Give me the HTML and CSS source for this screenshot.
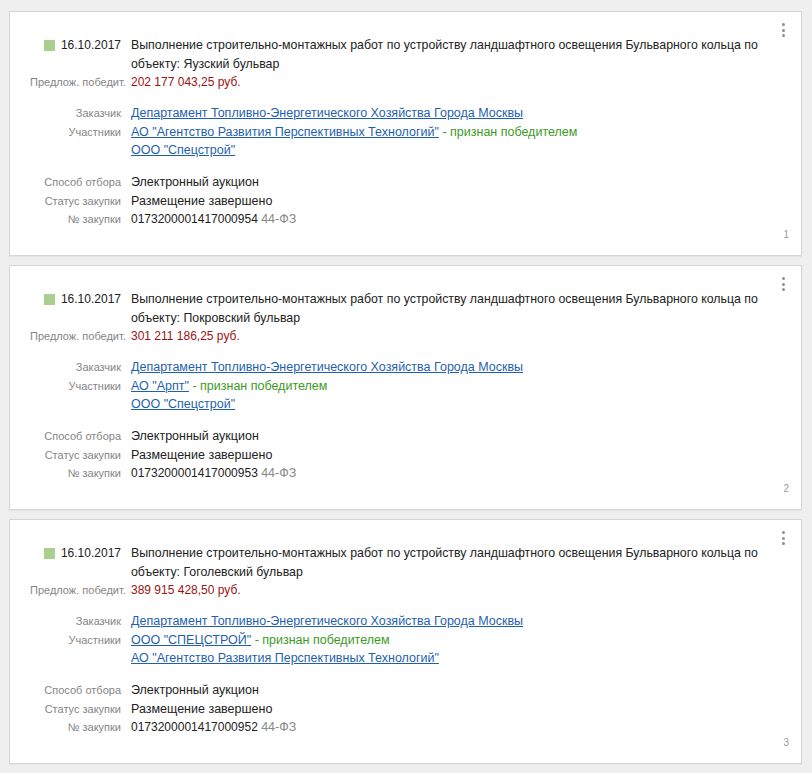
FILE: index.html
```html
<!DOCTYPE html>
<html lang="ru">
<head>
<meta charset="utf-8">
<title>Закупки</title>
<link rel="stylesheet" href="styles.css">
</head>
<body>
<div class="list">

  <div class="card">
    <button class="menu" aria-label="Меню"><span></span><span></span><span></span></button>
    <div class="grid">
      <div class="label date-cell"><span class="sq"></span><span class="date">16.10.2017</span></div>
      <div class="value title">Выполнение строительно-монтажных работ по устройству ландшафтного освещения Бульварного кольца по объекту: Яузский бульвар</div>
      <div class="label">Предлож. победит.</div>
      <div class="value price">202 177 043,25 руб.</div>
    </div>
    <div class="grid group">
      <div class="label">Заказчик</div>
      <div class="value"><a href="#">Департамент Топливно-Энергетического Хозяйства Города Москвы</a></div>
      <div class="label">Участники</div>
      <div class="value"><a href="#">АО "Агентство Развития Перспективных Технологий"</a> <span class="win">- признан победителем</span><br><a href="#">ООО "Спецстрой"</a></div>
    </div>
    <div class="grid group group2">
      <div class="label">Способ отбора</div>
      <div class="value">Электронный аукцион</div>
      <div class="label">Статус закупки</div>
      <div class="value">Размещение завершено</div>
      <div class="label">№ закупки</div>
      <div class="value num-value">0173200001417000954 <span class="law">44-ФЗ</span></div>
    </div>
    <div class="num">1</div>
  </div>

  <div class="card">
    <button class="menu" aria-label="Меню"><span></span><span></span><span></span></button>
    <div class="grid">
      <div class="label date-cell"><span class="sq"></span><span class="date">16.10.2017</span></div>
      <div class="value title">Выполнение строительно-монтажных работ по устройству ландшафтного освещения Бульварного кольца по объекту: Покровский бульвар</div>
      <div class="label">Предлож. победит.</div>
      <div class="value price">301 211 186,25 руб.</div>
    </div>
    <div class="grid group">
      <div class="label">Заказчик</div>
      <div class="value"><a href="#">Департамент Топливно-Энергетического Хозяйства Города Москвы</a></div>
      <div class="label">Участники</div>
      <div class="value"><a href="#">АО "Арпт"</a> <span class="win">- признан победителем</span><br><a href="#">ООО "Спецстрой"</a></div>
    </div>
    <div class="grid group group2">
      <div class="label">Способ отбора</div>
      <div class="value">Электронный аукцион</div>
      <div class="label">Статус закупки</div>
      <div class="value">Размещение завершено</div>
      <div class="label">№ закупки</div>
      <div class="value num-value">0173200001417000953 <span class="law">44-ФЗ</span></div>
    </div>
    <div class="num">2</div>
  </div>

  <div class="card">
    <button class="menu" aria-label="Меню"><span></span><span></span><span></span></button>
    <div class="grid">
      <div class="label date-cell"><span class="sq"></span><span class="date">16.10.2017</span></div>
      <div class="value title">Выполнение строительно-монтажных работ по устройству ландшафтного освещения Бульварного кольца по объекту: Гоголевский бульвар</div>
      <div class="label">Предлож. победит.</div>
      <div class="value price">389 915 428,50 руб.</div>
    </div>
    <div class="grid group">
      <div class="label">Заказчик</div>
      <div class="value"><a href="#">Департамент Топливно-Энергетического Хозяйства Города Москвы</a></div>
      <div class="label">Участники</div>
      <div class="value"><a href="#">ООО "СПЕЦСТРОЙ"</a> <span class="win">- признан победителем</span><br><a href="#">АО "Агентство Развития Перспективных Технологий"</a></div>
    </div>
    <div class="grid group group2">
      <div class="label">Способ отбора</div>
      <div class="value">Электронный аукцион</div>
      <div class="label">Статус закупки</div>
      <div class="value">Размещение завершено</div>
      <div class="label">№ закупки</div>
      <div class="value num-value">0173200001417000952 <span class="law">44-ФЗ</span></div>
    </div>
    <div class="num">3</div>
  </div>

</div>
</body>
</html>
```

FILE: styles.css
```css
* { box-sizing: border-box; }
html, body {
  margin: 0;
  padding: 0;
  background: #efefef;
}
body {
  font-family: "Liberation Sans", Arial, Helvetica, sans-serif;
  font-size: 12px;
  color: #222;
}
.list {
  display: flex;
  flex-direction: column;
  gap: 9px;
  padding: 11px 10px 9px 9px;
}
.card {
  position: relative;
  display: flex;
  flex-direction: column;
  height: 245px;
  background: #fff;
  border: 1px solid #d6d6d6;
  box-shadow: 0 1px 1px rgba(0,0,0,0.04);
  padding: 24px 28px 17px 20px;
}
.grid {
  display: grid;
  grid-template-columns: 91px 1fr;
  column-gap: 10px;
  line-height: 18.5px;
}
.group { margin-top: 12.5px; }
.group2 { margin-top: 13.5px; }
.label {
  text-align: right;
  font-size: 11px;
  color: #858585;
  white-space: nowrap;
}
.date-cell {
  display: flex;
  justify-content: flex-end;
  align-items: center;
  gap: 6px;
  height: 18.5px;
}
.sq {
  display: inline-block;
  width: 11px;
  height: 11px;
  background: #a9d08e;
}
.date {
  font-size: 12px;
  color: #222;
}
.value {
  color: #222;
  font-size: 12.5px;
}
.title { font-size: 12.35px; }
.price { color: #9c1212; font-size: 12px; }
.num-value { font-size: 12px; }
.law { color: #888; font-size: 12.5px; }
a { color: #1f5fb0; text-decoration: underline; }
.win { color: #3d9a1f; }
.num {
  margin-top: auto;
  text-align: right;
  font-size: 10px;
  line-height: 12px;
  color: #999;
  margin-right: -16px;
}
.menu {
  position: absolute;
  top: 11px;
  right: 16px;
  display: flex;
  flex-direction: column;
  gap: 2.5px;
  padding: 0;
  border: 0;
  background: none;
  cursor: pointer;
}
.menu span {
  display: block;
  width: 3px;
  height: 3px;
  border-radius: 50%;
  background: #8f8f8f;
}
```
